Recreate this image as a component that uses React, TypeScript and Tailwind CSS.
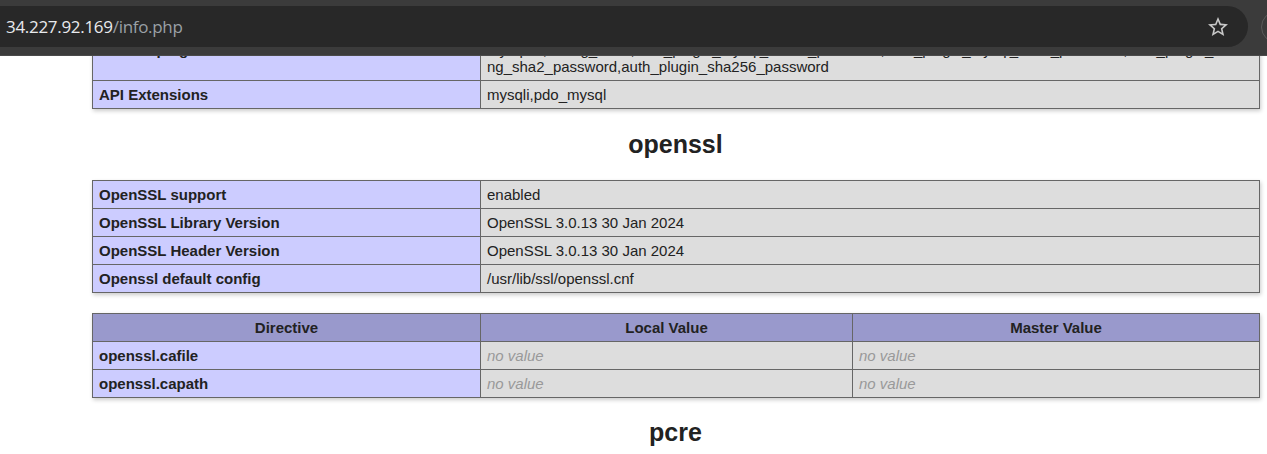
import React from "react";

const cellBase = "border border-[#666] px-[6px] py-[5px] text-[15px] leading-[17px] align-baseline";
const eCell = `${cellBase} bg-[#ccf] font-bold`;
const vCell = `${cellBase} bg-[#ddd] break-words`;
const hCell = `${cellBase} bg-[#99c] font-bold text-center`;

function NoValue() {
  return <i className="text-[#999]">no value</i>;
}

export default function App() {
  return (
    <div
      className="relative h-[454px] w-[1267px] overflow-hidden bg-white text-[#222]"
      style={{ fontFamily: '"Liberation Sans", Arial, sans-serif' }}
    >
      {/* browser toolbar overlay */}
      <div className="absolute left-0 top-0 z-10 h-[56px] w-full border-b border-[#4a4a4a] bg-[#3b3b3b]">
        <div className="absolute left-[-30px] top-[6px] flex h-[41px] w-[1278px] items-center rounded-full bg-[#282828] pl-[36px]">
          <span className="text-[17px] tracking-[-0.3px]" style={{ fontFamily: '"Open Sans", "Noto Sans", sans-serif' }}>
            <span className="text-[#e8eaed]">34.227.92.169</span>
            <span className="text-[#9aa0a6]">/info.php</span>
          </span>
          <svg
            className="absolute left-[1236px] top-[9px]"
            width="24"
            height="24"
            viewBox="0 0 24 24"
            fill="#c8c8c8"
          >
            <path d="M22 9.24l-7.19-.62L12 2 9.19 8.63 2 9.24l5.46 4.730L5.82 21 12 17.27 18.18 21l-1.63-7.03L22 9.24zM12 15.4l-3.76 2.27 1-4.28-3.32-2.88 4.38-.38L12 6.1l1.71 4.04 4.38.38-3.32 2.88 1 4.28L12 15.4z" />
          </svg>
        </div>
        <div className="absolute left-[1261px] top-[11px] h-[32px] w-[32px] rounded-full border border-[#5a5a5a]" />
      </div>

      {/* page content */}
      <div className="ml-[92px] w-[1167px] pt-[35px]">
        <table className="w-[1167px] table-fixed border-collapse shadow-[1px_2px_4px_#ccc]">
          <colgroup>
            <col className="w-[388px]" />
            <col className="w-[779px]" />
          </colgroup>
          <tbody>
            <tr>
              <td className={eCell}>Loaded plugins</td>
              <td className={`${vCell} whitespace-nowrap overflow-hidden`}>
                mysqlnd,debug_trace,auth_plugin_mysql_native_password,auth_plugin_mysql_clear_password,auth_plugin_cachi
                <br />
                ng_sha2_password,auth_plugin_sha256_password
              </td>
            </tr>
            <tr>
              <td className={eCell}>API Extensions</td>
              <td className={vCell}>mysqli,pdo_mysql</td>
            </tr>
          </tbody>
        </table>

        <h2 className="my-[21px] text-center text-[25px] font-bold leading-[29px]">openssl</h2>

        <table className="w-[1167px] table-fixed border-collapse shadow-[1px_2px_4px_#ccc]">
          <colgroup>
            <col className="w-[388px]" />
            <col className="w-[779px]" />
          </colgroup>
          <tbody>
            <tr>
              <td className={eCell}>OpenSSL support</td>
              <td className={vCell}>enabled</td>
            </tr>
            <tr>
              <td className={eCell}>OpenSSL Library Version</td>
              <td className={vCell}>OpenSSL 3.0.13 30 Jan 2024</td>
            </tr>
            <tr>
              <td className={eCell}>OpenSSL Header Version</td>
              <td className={vCell}>OpenSSL 3.0.13 30 Jan 2024</td>
            </tr>
            <tr>
              <td className={eCell}>Openssl default config</td>
              <td className={vCell}>/usr/lib/ssl/openssl.cnf</td>
            </tr>
          </tbody>
        </table>

        <table className="mt-[20px] w-[1167px] table-fixed border-collapse shadow-[1px_2px_4px_#ccc]">
          <colgroup>
            <col className="w-[388px]" />
            <col className="w-[372px]" />
            <col className="w-[407px]" />
          </colgroup>
          <tbody>
            <tr>
              <th className={hCell}>Directive</th>
              <th className={hCell}>Local Value</th>
              <th className={hCell}>Master Value</th>
            </tr>
            <tr>
              <td className={eCell}>openssl.cafile</td>
              <td className={vCell}>
                <NoValue />
              </td>
              <td className={vCell}>
                <NoValue />
              </td>
            </tr>
            <tr>
              <td className={eCell}>openssl.capath</td>
              <td className={vCell}>
                <NoValue />
              </td>
              <td className={vCell}>
                <NoValue />
              </td>
            </tr>
          </tbody>
        </table>

        <h2 className="my-[20px] text-center text-[25px] font-bold leading-[29px]">pcre</h2>
      </div>
    </div>
  );
}
